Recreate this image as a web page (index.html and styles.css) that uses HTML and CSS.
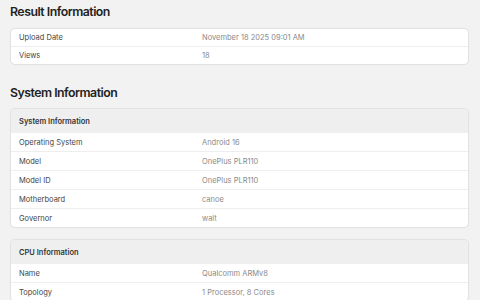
FILE: index.html
```html
<!DOCTYPE html>
<html>
<head>
<meta charset="utf-8">
<link rel="stylesheet" href="styles.css">
</head>
<body>
<div class="page">
  <h2 class="title">Result Information</h2>
  <div class="card compact">
    <div class="row"><span class="label">Upload Date</span><span class="value">November 18 2025 09:01 AM</span></div>
    <div class="row"><span class="label">Views</span><span class="value">18</span></div>
  </div>

  <h2 class="title t2">System Information</h2>
  <div class="card">
    <div class="head">System Information</div>
    <div class="row"><span class="label">Operating System</span><span class="value">Android 16</span></div>
    <div class="row"><span class="label">Model</span><span class="value">OnePlus PLR110</span></div>
    <div class="row"><span class="label">Model ID</span><span class="value">OnePlus PLR110</span></div>
    <div class="row"><span class="label">Motherboard</span><span class="value">canoe</span></div>
    <div class="row"><span class="label">Governor</span><span class="value">walt</span></div>
  </div>

  <div class="card c3">
    <div class="head">CPU Information</div>
    <div class="row"><span class="label">Name</span><span class="value">Qualcomm ARMv8</span></div>
    <div class="row"><span class="label">Topology</span><span class="value">1 Processor, 8 Cores</span></div>
  </div>
</div>
</body>
</html>
```
FILE: styles.css
```css
html, body {
  margin: 0;
  padding: 0;
  background: #f2f2f2;
  font-family: Inter, "Liberation Sans", sans-serif;
  overflow: hidden;
}
.page {
  padding: 4px 11px 0 10px;
}
.title {
  margin: 0 0 8px 0;
  font-size: 12.3px;
  font-weight: 600;
  color: #222;
  line-height: 16px;
  letter-spacing: -0.5px;
}
.t2 {
  margin-top: 20px;
  margin-bottom: 7px;
}
.card {
  background: #fff;
  border: 1px solid #e2e2e2;
  border-radius: 5px;
  overflow: hidden;
  box-shadow: 0 0 1px rgba(0,0,0,0.05);
}
.c3 {
  margin-top: 11px;
}
.head {
  background: #efefef;
  height: 24px;
  display: flex;
  align-items: center;
  padding-left: 8px;
  font-size: 7.5px;
  font-weight: 600;
  color: #333;
}
.row {
  display: flex;
  align-items: center;
  height: 18px;
  padding-left: 8px;
  border-top: 1px solid #eeeeee;
  font-size: 7.5px;
}
.compact .row {
  height: 17px;
}
.card > .row:first-child {
  border-top: none;
}
.head + .row {
  border-top: none;
}
.label {
  width: 183px;
  color: #444;
}
.value {
  color: #8a8a8a;
}
```
